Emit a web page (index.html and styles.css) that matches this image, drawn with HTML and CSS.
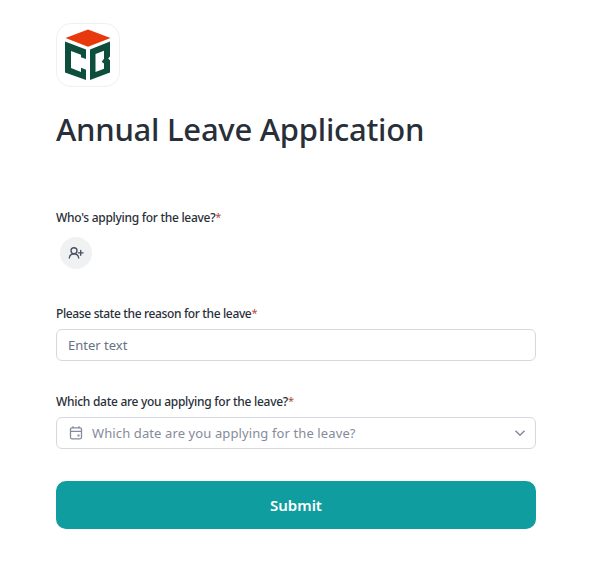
FILE: index.html
```
<!DOCTYPE html>
<html lang="en">
<head>
<meta charset="utf-8">
<title>Annual Leave Application</title>
<link rel="stylesheet" href="styles.css">
</head>
<body>
<main class="form">
  <div class="logo">
    <svg width="62" height="62" viewBox="0 0 62 62" aria-hidden="true">
      <path fill="#e8380d" d="M31 5.500 53.500 14 31 22.800 8.500 14z"/>
      <g fill="#0d4f3c">
        <path d="M8 17.500 29 25.500v9.500l-5-1.800v-2.500L14 27v17l10 4v-4.200l5 1.900V56L8 48.500z"/>
        <path fill-rule="evenodd" d="M33 25.500 53 17.500v14.700l-1.800 2.600 1.800 1.400v12.300L33 56zM38.500 30v18l8.500-3.200v-5.300l-2.300-1.800 2.300-3v-8z"/>
      </g>
    </svg>
  </div>
  <h1 class="title">Annual Leave Application</h1>

  <section class="person-field">
    <div class="label who">Who's applying for the leave?<span class="required">*</span></div>
    <button class="add-person" type="button" aria-label="Add person">
      <svg width="16" height="16" viewBox="0 0 16 16" fill="none" stroke="#4b5162" stroke-width="1.350" stroke-linecap="round" aria-hidden="true">
        <circle cx="6" cy="5.700" r="3"/>
        <path d="M1.300 13c.3-2.500 2.200-4.200 4.700-4.200s4.400 1.700 4.700 4.200M12.700 5.400v4.800M10.300 7.800h4.800"/>
      </svg>
    </button>
  </section>

  <section class="reason-field">
    <div class="label">Please state the reason for the leave<span class="required">*</span></div>
    <div class="input">Enter text</div>
  </section>

  <section class="date-field">
    <div class="label date">Which date are you applying for the leave?<span class="required">*</span></div>
    <div class="input select">
      <svg class="calendar" width="14" height="14" viewBox="0 0 14 14" fill="none" stroke="#858b9b" stroke-width="1.300" aria-hidden="true">
        <rect x="1.500" y="1.800" width="11" height="11" rx="1.500"/>
        <path d="M1.500 5.300h11M4 .2v2M10 .2v2"/>
        <path fill="#858b9b" stroke="none" d="M8.500 8.500h2v2h-2z"/>
      </svg>
      <span class="placeholder">Which date are you applying for the leave?</span>
      <svg class="chevron" width="12" height="8" viewBox="0 0 12 8" fill="none" stroke="#858b9b" stroke-width="1.500" aria-hidden="true"><path d="M1.500 1.700 6 6.200l4.500-4.500"/></svg>
    </div>
  </section>

  <button class="submit" type="button">Submit</button>
</main>
</body>
</html>
```
FILE: styles.css
```
* { box-sizing: border-box; }
body {
  margin: 0;
  background: #fff;
  font-family: "Noto Sans", "Open Sans", sans-serif;
  color: #292f38;
}
.form {
  width: 480px;
  margin: 23px 0 0 56px;
}
.logo {
  width: 64px;
  height: 64px;
  border: 1px solid #f0f0f1;
  border-radius: 15px;
  overflow: hidden;
}
.logo svg { display: block; }
.title {
  margin: 18px 0 56px;
  height: 48px;
  font-size: 31px;
  line-height: 48px;
  font-weight: 500;
  letter-spacing: -0.25px;
  white-space: nowrap;
}
.label {
  height: 16px;
  font-size: 12px;
  line-height: 18px;
  font-weight: 500;
  letter-spacing: -0.36px;
  white-space: nowrap;
}
.who { letter-spacing: -0.29px; }
.date { letter-spacing: -0.28px; }
.required {
  color: #b5483f;
  font-size: 11px;
  line-height: 1;
  font-weight: 400;
  vertical-align: 1px;
}
.person-field { height: 96px; }
.add-person {
  display: flex;
  align-items: center;
  justify-content: center;
  width: 32px;
  height: 32px;
  margin: 12px 0 0 4px;
  padding: 0;
  border: 0;
  border-radius: 50%;
  background: #f0f1f3;
}
.reason-field, .date-field { height: 88px; }
.input {
  display: flex;
  align-items: center;
  height: 32px;
  margin-top: 8px;
  padding: 0 11px;
  border: 1px solid #d6d8df;
  border-radius: 6px;
  color: #69717f;
  font-size: 13px;
  line-height: 20px;
  white-space: nowrap;
}
.select { padding: 0 9px 0 12px; color: #858b9b; }
.calendar { margin-right: 9px; }
.placeholder { letter-spacing: 0.11px; }
.chevron { margin-left: auto; }
.submit {
  display: block;
  width: 100%;
  height: 48px;
  padding: 0;
  border: 0;
  border-radius: 10px;
  background: #109da0;
  color: #fff;
  font: 600 15px/24px "Noto Sans", "Open Sans", sans-serif;
}
```
